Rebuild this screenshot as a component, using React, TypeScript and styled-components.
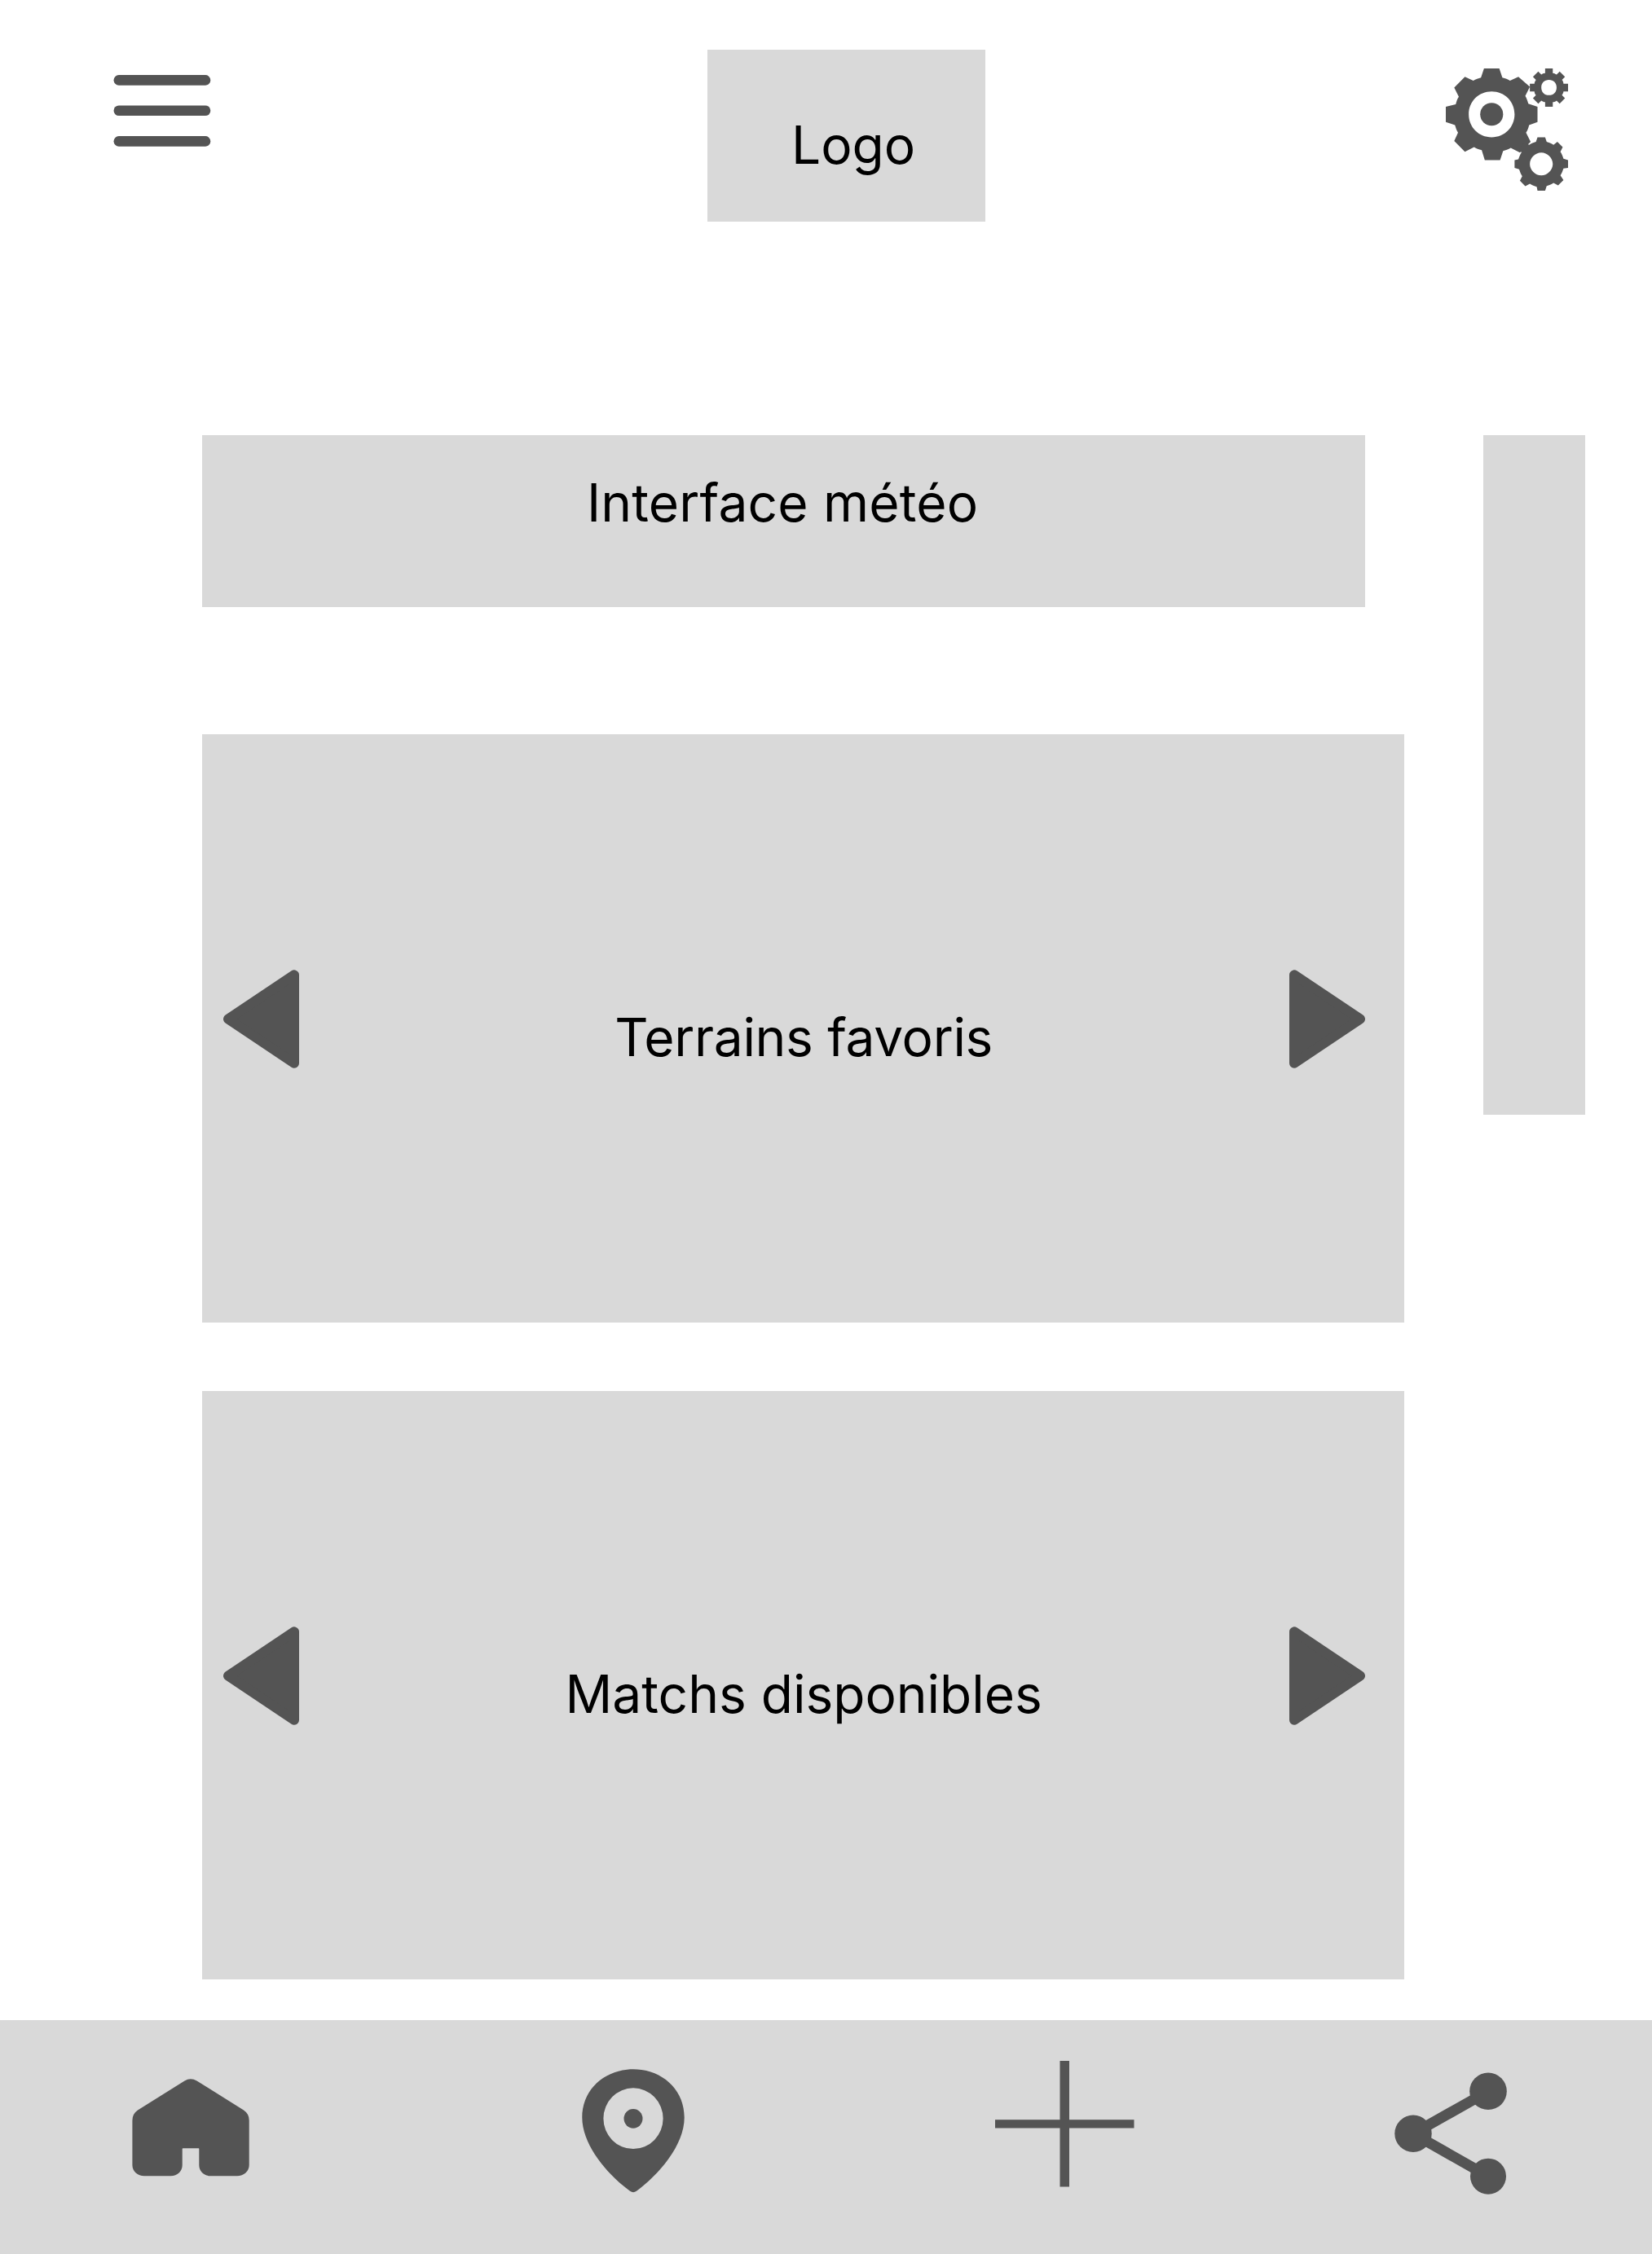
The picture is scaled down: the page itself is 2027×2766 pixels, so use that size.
import React from "react";
import styled, { createGlobalStyle } from "styled-components";

const INK = "#545454";
const PANEL = "#d9d9d9";

const GlobalStyle = createGlobalStyle`
  * { box-sizing: border-box; }
  body { margin: 0; background: #fff; }
`;

const Screen = styled.div`
  display: flex;
  flex-direction: column;
  width: 2027px;
  height: 2766px;
  background: #fff;
  color: #000;
  font-family: Inter, "Liberation Sans", sans-serif;
  font-size: 64px;
  line-height: 78px;
  overflow: hidden;
`;

const Header = styled.header`
  display: grid;
  grid-template-columns: 729px 906px auto;
  align-items: start;
  justify-items: start;
  height: 534px;
  padding: 61px 0 0 139px;
`;

const IconButton = styled.button<{ $top?: number }>`
  display: block;
  border: 0;
  padding: 0;
  margin: ${(p) => p.$top ?? 0}px 0 0;
  background: none;
  line-height: 0;
  color: ${INK};
  svg { display: block; fill: currentColor; }
`;

const LogoBox = styled.div`
  width: 341px;
  height: 211px;
  padding: 78px 0 0 103px;
  background: ${PANEL};
`;

const Body = styled.main`
  display: flex;
  align-items: flex-start;
  justify-content: space-between;
  height: 1945px;
  padding: 0 82px 0 248px;
`;

const Column = styled.div`
  display: flex;
  flex-direction: column;
  width: 1475px;
`;

const Weather = styled.section`
  width: 1427px;
  height: 211px;
  margin-bottom: 156px;
  padding: 44px 0 0 472px;
  background: ${PANEL};
  letter-spacing: 0.18px;
`;

const Carousel = styled.section`
  display: flex;
  justify-content: space-between;
  align-items: flex-start;
  height: 722px;
  padding: 289px 48px 0 26px;
  margin-bottom: 84px;
  background: ${PANEL};
`;

const Title = styled.h2<{ $tracking: number }>`
  margin: 44px 0 0 23.4px;
  font-size: inherit;
  font-weight: 400;
  letter-spacing: ${(p) => p.$tracking}px;
  white-space: nowrap;
`;

const SideBar = styled.aside`
  width: 125px;
  height: 834px;
  background: ${PANEL};
`;

const Footer = styled.nav`
  display: grid;
  grid-template-columns: 552px 507px 490px auto;
  align-items: start;
  justify-items: start;
  height: 287px;
  padding: 50px 0 0 162px;
  background: ${PANEL};
`;

const Arrow = ({ right }: { right?: boolean }) => (
  <IconButton aria-label={right ? "Suivant" : "Précédent"}>
    <svg width="93" height="121" viewBox="0 0 93 121">
      <path
        d={right ? "M6 6.3V114.7L87 60.5Z" : "M87 6.3V114.7L6 60.5Z"}
        stroke="currentColor"
        strokeWidth="12"
        strokeLinejoin="round"
      />
    </svg>
  </IconButton>
);

const Slider = ({ title, tracking = 0 }: { title: string; tracking?: number }) => (
  <Carousel>
    <Arrow />
    <Title $tracking={tracking}>{title}</Title>
    <Arrow right />
  </Carousel>
);

const MenuIcon = () => (
  <svg width="120" height="90" viewBox="0 0 120 90">
    {[1.1, 38.5, 76.1].map((y) => (
      <rect key={y} x="0.5" y={y} width="118.8" height="12.6" rx="6.3" />
    ))}
  </svg>
);

const CogsIcon = () => (
  <svg width="150" height="150" viewBox="0 0 16 16">
    <path d="M12 7v-2l-1.2-0.4c-0.1-0.3-0.2-0.7-0.4-1l0.6-1.2-1.5-1.3-1.1 0.5c-0.3-0.2-0.6-0.3-1-0.4l-0.4-1.2h-2l-0.4 1.2c-0.3 0.1-0.7 0.2-1 0.4l-1.1-0.5-1.4 1.4 0.6 1.2c-0.2 0.3-0.3 0.6-0.4 1l-1.3 0.3v2l1.2 0.4c0.1 0.3 0.2 0.7 0.4 1l-0.5 1.1 1.4 1.4 1.2-0.6c0.3 0.2 0.6 0.3 1 0.4l0.4 1.3h2l0.4-1.2c0.3-0.1 0.7-0.2 1-0.4l1.2 0.6 1.4-1.4-0.6-1.2c0.2-0.3 0.3-0.6 0.4-1l1.1-0.4zM6 9c-1.7 0-3-1.3-3-3s1.3-3 3-3 3 1.3 3 3-1.3 3-3 3z" />
    <circle cx="6" cy="6" r="1.5" />
    <path d="M16 3v-1h-0.6c0-0.2-0.1-0.4-0.2-0.5l0.4-0.4-0.7-0.7-0.4 0.4c-0.2-0.1-0.3-0.2-0.5-0.2v-0.6h-1v0.6c-0.2 0-0.4 0.1-0.5 0.2l-0.4-0.4-0.7 0.7 0.4 0.4c-0.1 0.2-0.2 0.3-0.2 0.5h-0.6v1h0.6c0 0.2 0.1 0.4 0.2 0.5l-0.4 0.4 0.7 0.7 0.4-0.4c0.2 0.1 0.3 0.2 0.5 0.2v0.6h1v-0.6c0.2 0 0.4-0.1 0.5-0.2l0.4 0.4 0.7-0.7-0.4-0.4c0.1-0.2 0.2-0.3 0.2-0.5h0.6zM13.5 3.5c-0.6 0-1-0.4-1-1s0.4-1 1-1 1 0.4 1 1-0.4 1-1 1z" />
    <path d="M15.4 11.8c-0.1-0.3-0.2-0.6-0.4-0.9l0.3-0.6-0.7-0.7-0.5 0.4c-0.3-0.2-0.6-0.3-0.9-0.4l-0.2-0.6h-1l-0.2 0.6c-0.3 0.1-0.6 0.2-0.9 0.4l-0.6-0.3-0.7 0.7 0.3 0.6c-0.2 0.3-0.3 0.6-0.4 0.9l-0.5 0.1v1l0.6 0.2c0.1 0.3 0.2 0.6 0.4 0.9l-0.3 0.6 0.7 0.7 0.6-0.3c0.3 0.2 0.6 0.3 0.9 0.4l0.1 0.5h1l0.2-0.6c0.3-0.1 0.6-0.2 0.9-0.4l0.6 0.3 0.7-0.7-0.4-0.6c0.2-0.3 0.3-0.6 0.4-0.9l0.6-0.1v-1l-0.6-0.2zM12.5 14c-0.8 0-1.5-0.7-1.5-1.5s0.7-1.5 1.5-1.5 1.5 0.7 1.5 1.5-0.7 1.5-1.5 1.5z" />
  </svg>
);

const HomeIcon = () => (
  <svg width="144" height="120" viewBox="0 0 144 120">
    <path d="M64.5 2.5Q71.8 -1.9 79.5 2.5L137 38.5Q143.7 43 143.7 51V106C143.7 113.5 137 119.3 129 119.3H96.5C88.5 119.3 82.3 113.5 82.3 106V86Q82.3 85.3 81.6 85.3H62.4Q61.7 85.3 61.7 86V106C61.7 113.5 55.5 119.3 47.5 119.3H15C7 119.3 .4 113.5 .4 106V51Q.4 43 7 38.5Z" />
  </svg>
);

const PinIcon = () => (
  <svg width="126" height="152" viewBox="0 0 126 152">
    <path
      fillRule="evenodd"
      d="M63 .2C97 .2 125.7 24 125.7 59.5C125.7 94 93.5 130.5 67 149.7Q63 152.6 59 149.7C32.5 130.5 .3 94 .3 59.5C.3 24 29 .2 63 .2ZM63 23.3A36.6 37.4 0 1 0 63 98.1A36.6 37.4 0 1 0 63 23.3Z"
    />
    <ellipse cx="63" cy="60.8" rx="11.5" ry="11.9" />
  </svg>
);

const PlusIcon = () => (
  <svg width="171" height="155" viewBox="0 0 171 155">
    <rect x="0" y="72.2" width="170.5" height="10.3" />
    <rect x="79.5" y="0" width="11.5" height="154.5" />
  </svg>
);

const ShareIcon = () => (
  <svg width="139" height="150" viewBox="0 0 139 150">
    <path d="M115 23.3L23 75.3L115 127.7" fill="none" stroke="currentColor" strokeWidth="13" />
    <circle cx="115" cy="23.3" r="22.8" />
    <circle cx="23" cy="75.3" r="22.7" />
    <circle cx="115" cy="127.7" r="22" />
  </svg>
);

export default function App() {
  return (
    <>
      <GlobalStyle />
      <Screen>
        <Header>
          <IconButton aria-label="Menu" $top={30}><MenuIcon /></IconButton>
          <LogoBox>Logo</LogoBox>
          <IconButton aria-label="Réglages" $top={23}><CogsIcon /></IconButton>
        </Header>
        <Body>
          <Column>
            <Weather>Interface météo</Weather>
            <Slider title="Terrains favoris" tracking={-0.33} />
            <Slider title="Matchs disponibles" />
          </Column>
          <SideBar />
        </Body>
        <Footer>
          <IconButton aria-label="Accueil" $top={22}><HomeIcon /></IconButton>
          <IconButton aria-label="Carte" $top={10}><PinIcon /></IconButton>
          <IconButton aria-label="Ajouter"><PlusIcon /></IconButton>
          <IconButton aria-label="Partager" $top={14}><ShareIcon /></IconButton>
        </Footer>
      </Screen>
    </>
  );
}
